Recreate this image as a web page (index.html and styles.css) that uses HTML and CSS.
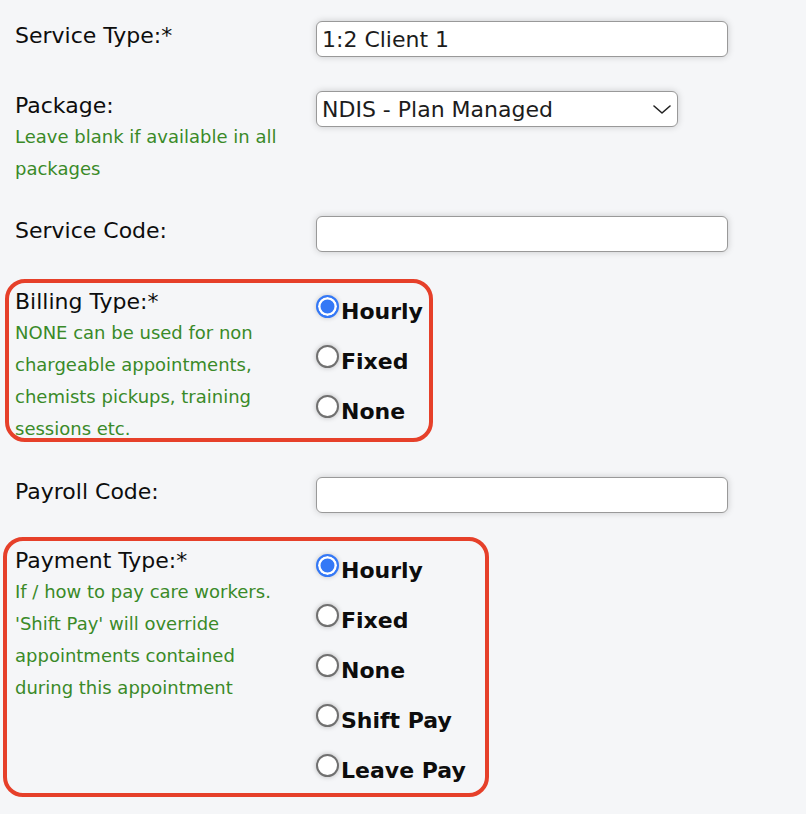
FILE: index.html
```html
<!DOCTYPE html>
<html lang="en">
<head>
<meta charset="utf-8">
<title>Service Type</title>
<link rel="stylesheet" href="styles.css">
</head>
<body>
<form class="form">
  <div class="row row--first">
    <div class="label-col"><div class="label">Service Type:*</div></div>
    <div class="field-col"><input class="text-input" type="text" value="1:2 Client 1"></div>
  </div>

  <div class="row row--package">
    <div class="label-col">
      <div class="label">Package:</div>
      <div class="hint">Leave blank if available in all packages</div>
    </div>
    <div class="field-col">
      <div class="select-wrap">
        <select class="select-input">
          <option>NDIS - Plan Managed</option>
        </select>
        <svg class="chevron" width="18" height="9" viewBox="0 0 18 9"><path d="M1 1 L9 8 L17 1" fill="none" stroke="#222" stroke-width="1.6" stroke-linecap="round" stroke-linejoin="round"/></svg>
      </div>
    </div>
  </div>

  <div class="row row--code">
    <div class="label-col"><div class="label">Service Code:</div></div>
    <div class="field-col"><input class="text-input" type="text" value=""></div>
  </div>

  <div class="row boxed boxed--billing">
    <div class="label-col">
      <div class="label">Billing Type:*</div>
      <div class="hint hint--overflow">NONE can be used for non chargeable appointments, chemists pickups, training sessions etc.</div>
    </div>
    <div class="field-col radio-list">
      <label class="radio-row"><input class="radio" type="radio" name="billing" checked>Hourly</label>
      <label class="radio-row"><input class="radio" type="radio" name="billing">Fixed</label>
      <label class="radio-row"><input class="radio" type="radio" name="billing">None</label>
    </div>
  </div>

  <div class="row row--payroll">
    <div class="label-col"><div class="label">Payroll Code:</div></div>
    <div class="field-col"><input class="text-input" type="text" value=""></div>
  </div>

  <div class="row boxed boxed--payment">
    <div class="label-col">
      <div class="label">Payment Type:*</div>
      <div class="hint">If / how to pay care workers. 'Shift Pay' will override appointments contained during this appointment</div>
    </div>
    <div class="field-col radio-list">
      <label class="radio-row"><input class="radio" type="radio" name="payment" checked>Hourly</label>
      <label class="radio-row"><input class="radio" type="radio" name="payment">Fixed</label>
      <label class="radio-row"><input class="radio" type="radio" name="payment">None</label>
      <label class="radio-row"><input class="radio" type="radio" name="payment">Shift Pay</label>
      <label class="radio-row"><input class="radio" type="radio" name="payment">Leave Pay</label>
    </div>
  </div>
</form>
</body>
</html>
```

FILE: styles.css
```css
html, body {
  margin: 0;
  padding: 0;
  background: #f5f6f8;
}

body {
  font-family: "DejaVu Sans", Verdana, sans-serif;
  color: #111;
}

.form {
  display: flex;
  flex-direction: column;
  padding: 21px 0 0 15px;
  margin: 0;
}

.row {
  display: flex;
  align-items: flex-start;
}

.row--package { margin-top: 34px; }
.row--code { margin-top: 31px; }
.boxed--billing { margin-top: 27px; }
.row--payroll { margin-top: 35px; }
.boxed--payment { margin-top: 24px; }

.label-col {
  width: 301px;
  flex: 0 0 301px;
}

.label {
  font-size: 22px;
  line-height: 30px;
  color: #0d0d0d;
}

.hint {
  font-size: 18px;
  line-height: 32px;
  color: #3a8a28;
  max-width: 274px;
}

.hint--overflow {
  margin-bottom: -8px;
}

.field-col {
  flex: 0 0 auto;
}

.text-input,
.select-input {
  box-sizing: border-box;
  height: 36px;
  border: 1.5px solid #999;
  border-radius: 6px;
  background: #fff;
  font-family: "DejaVu Sans", Verdana, sans-serif;
  font-size: 22px;
  color: #1c1c1c;
  padding: 0 5px;
  margin: 0;
  box-shadow: 0 0 7px rgba(0, 0, 0, 0.18);
  outline: none;
}

.text-input {
  width: 412px;
}

.select-wrap {
  position: relative;
  width: 362px;
}

.select-input {
  width: 362px;
  appearance: none;
  -webkit-appearance: none;
  padding-right: 30px;
}

.chevron {
  position: absolute;
  right: 7px;
  top: 14px;
  pointer-events: none;
}

.boxed {
  box-sizing: border-box;
  border: 4px solid #e6402a;
  border-radius: 20px;
}

.boxed--billing {
  margin-left: -10px;
  width: 428px;
  height: 163px;
  padding: 3.5px 0 0 6px;
}

.boxed--payment {
  margin-left: -12px;
  width: 486px;
  height: 260px;
  padding: 5px 0 0 8px;
}

.radio-list {
  display: flex;
  flex-direction: column;
}

.radio-row {
  display: block;
  font-size: 22px;
  font-weight: bold;
  line-height: 50px;
  color: #0d0d0d;
  white-space: nowrap;
}

.radio {
  appearance: none;
  -webkit-appearance: none;
  box-sizing: border-box;
  width: 23px;
  height: 23px;
  margin: 0 2px 1px 0;
  border: 2px solid #707070;
  border-radius: 50%;
  background: #fff;
  vertical-align: baseline;
  box-shadow: 0 0 5px rgba(0, 0, 0, 0.25);
}

.radio:checked {
  border: 2.5px solid #3478f6;
  background: #3478f6;
  box-shadow: inset 0 0 0 2.5px #fff, 0 0 5px rgba(0, 0, 0, 0.2);
}
```
